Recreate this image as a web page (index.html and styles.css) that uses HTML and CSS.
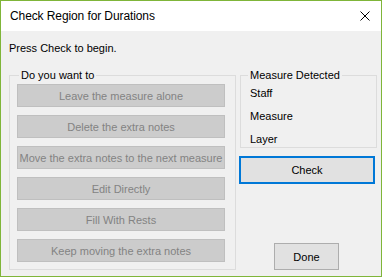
FILE: index.html
```html
<!DOCTYPE html>
<html>
<head>
<meta charset="UTF-8">
<title>Check Region for Durations</title>
<link rel="stylesheet" href="styles.css">
</head>
<body>
	<div class="window">
		<div class="titlebar">
			<span class="title">Check Region for Durations</span>
			<span class="close">
				<svg width="10" height="10" viewBox="0 0 10 10"><path d="M0.5 0.5 L9.5 9.5 M9.5 0.5 L0.5 9.5" stroke="#000" stroke-width="1" fill="none"/></svg>
			</span>
		</div>
		<div class="content">
			<div class="intro">Press Check to begin.</div>
			<div class="main">
				<fieldset class="choices">
					<legend>Do you want to</legend>
					<button class="choice" disabled>Leave the measure alone</button>
					<button class="choice" disabled>Delete the extra notes</button>
					<button class="choice" disabled>Move the extra notes to the next measure</button>
					<button class="choice" disabled>Edit Directly</button>
					<button class="choice" disabled>Fill With Rests</button>
					<button class="choice" disabled>Keep moving the extra notes</button>
				</fieldset>
				<div class="side">
					<fieldset class="detected">
						<legend>Measure Detected</legend>
						<div class="field">Staff</div>
						<div class="field">Measure</div>
						<div class="field">Layer</div>
					</fieldset>
					<button class="check">Check</button>
					<button class="done">Done</button>
				</div>
			</div>
		</div>
	</div>
</body>
</html>
```

FILE: styles.css
```css
body {
	margin: 0;
	font-family: "Liberation Sans", Arial, sans-serif;
	font-size: 11px;
	color: #000;
}

.window {
	width: 380px;
	height: 275px;
	border: 1px solid #7fb539;
	display: flex;
	flex-direction: column;
	background-color: #f0f0f0;
}

.titlebar {
	height: 30px;
	background-color: #fff;
	display: flex;
	align-items: center;
	justify-content: space-between;
	padding: 0 10px 0 9px;
}
.title {
	font-size: 12px;
	letter-spacing: -0.1px;
}
.close {
	display: flex;
	margin-right: 1px;
}

.content {
	flex: 1;
	display: flex;
	flex-direction: column;
	padding: 10px 4px 6px 8px;
}
.intro {
	line-height: 14px;
	margin-bottom: 13px;
}

.main {
	flex: 1;
	display: flex;
	gap: 3px;
}

fieldset {
	margin: 0;
	border: 1px solid #dcdcdc;
}
legend {
	line-height: 14px;
	padding: 0 2px;
}

.choices {
	width: 227px;
	box-sizing: border-box;
	padding: 2px 10px 6px 7px;
	display: flex;
	flex-direction: column;
	gap: 8px;
}
.choices legend {
	margin-left: 2px;
}
.choice {
	height: 23px;
	width: 208px;
	background-color: #cccccc;
	border: 1px solid #bfbfbf;
	color: #838383;
	font-family: inherit;
	font-size: 11px;
	padding: 0;
}

.side {
	width: 138px;
	display: flex;
	flex-direction: column;
}
.detected {
	margin-left: 1px;
	padding: 4px 0 1px 9px;
	display: flex;
	flex-direction: column;
	gap: 9px;
}
.detected legend {
	margin-left: -2px;
}
.field {
	line-height: 14px;
}

.check {
	margin-top: 8px;
	width: 136px;
	height: 28px;
	background-color: #e1e1e1;
	border: 2px solid #0078d7;
	font-family: inherit;
	font-size: 11px;
	color: #000;
	padding: 0;
}
.done {
	margin-top: auto;
	margin-left: 35px;
	width: 65px;
	height: 27px;
	background-color: #e1e1e1;
	border: 1px solid #adadad;
	font-family: inherit;
	font-size: 11px;
	color: #000;
	padding: 0;
}
```
